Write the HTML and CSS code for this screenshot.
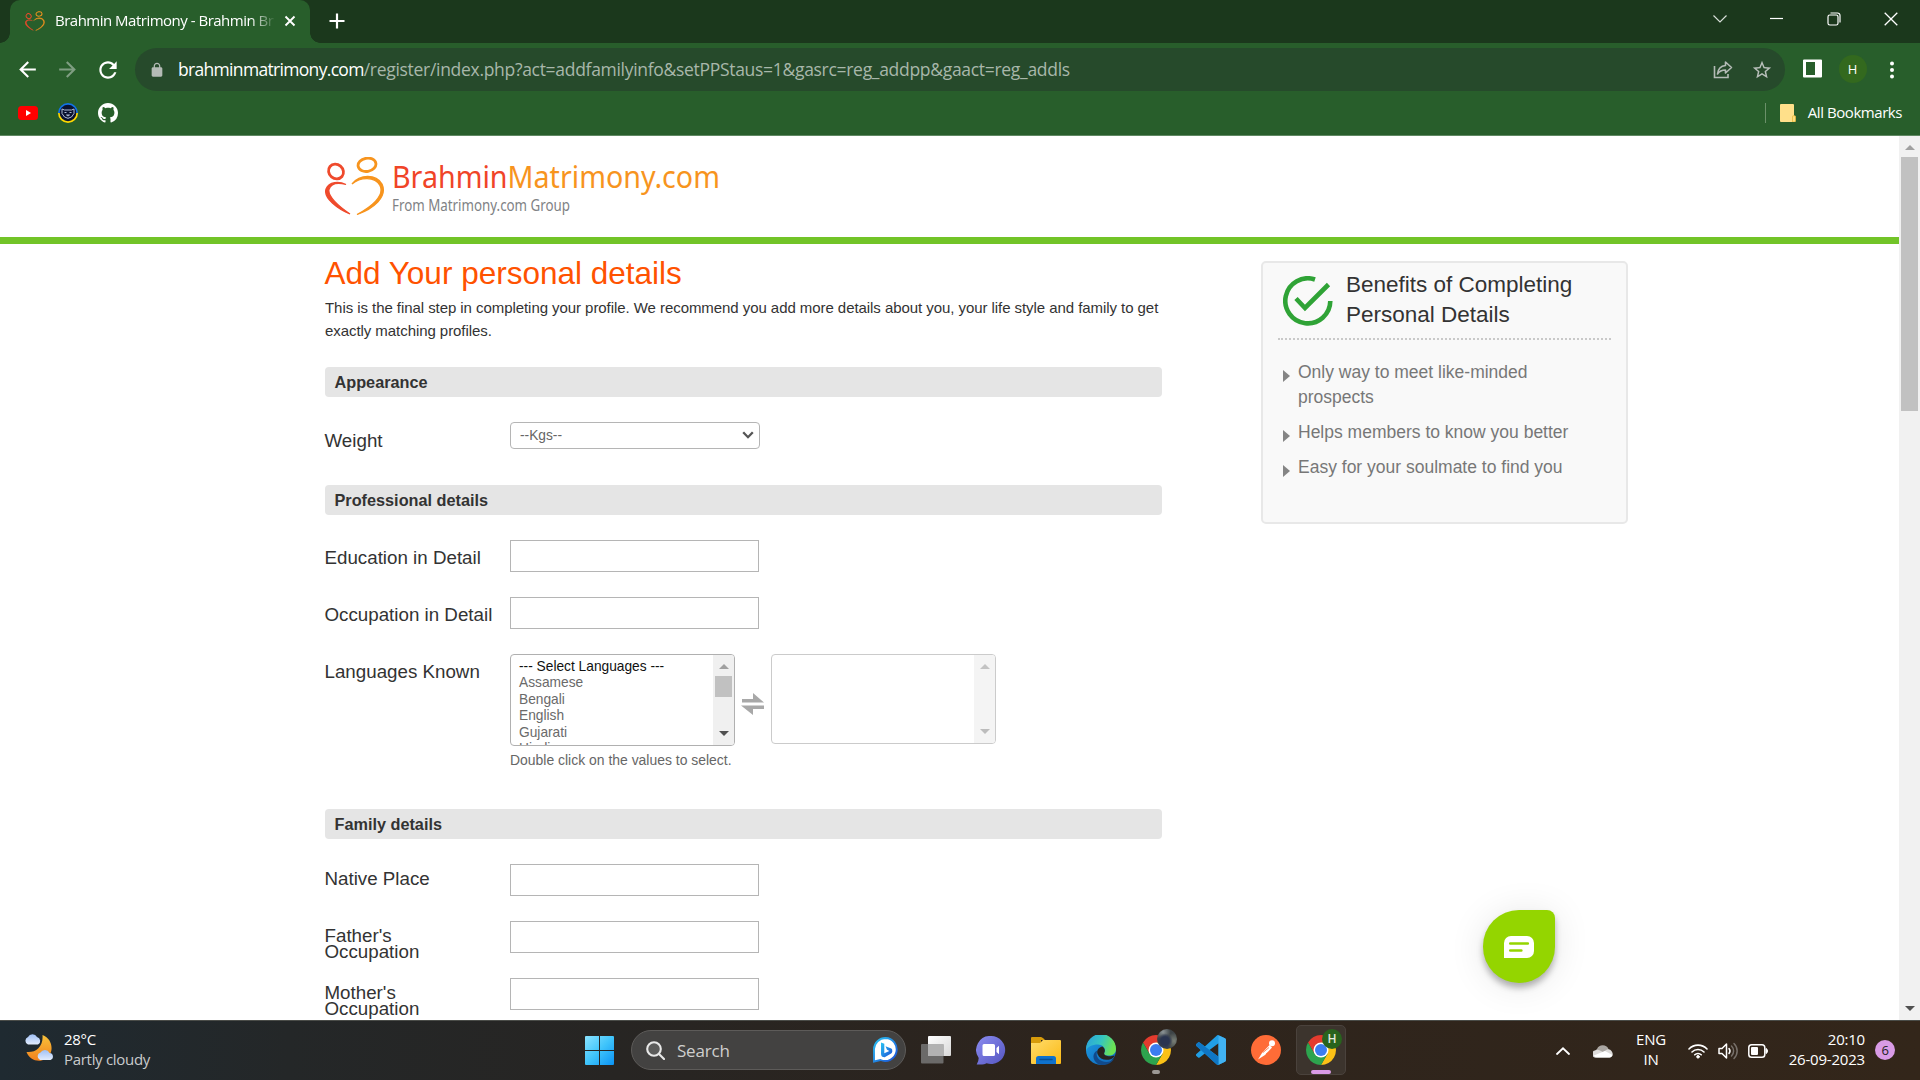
FILE: index.html
```html
<!DOCTYPE html>
<html lang="en">
<head>
<meta charset="utf-8">
<title>Brahmin Matrimony - Brahmin Brides</title>
<link rel="stylesheet" href="styles.css">
</head>
<body>
<svg class="defs" width="0" height="0">
  <defs>
    <symbol id="couple" viewBox="0 0 60 58">
      <g fill="none" stroke-linecap="round">
        <g stroke="#ef4a2c">
          <ellipse cx="11" cy="14.500" rx="7.800" ry="7" stroke-width="2.800" transform="rotate(40 11 14.500)"/>
          <path d="M21 27.500C14 24 4 24.500 1 32c-3 9 12 20 24 25C13 49 2.500 39 4 32.500 6 26 13 25.500 21 27.500z" stroke-width="1.200" fill="#ef4a2c"/>
        </g>
        <g stroke="#f7941e">
          <ellipse cx="42" cy="7.800" rx="9" ry="6.600" stroke-width="2.800" transform="rotate(-10 42 7.800)"/>
          <path d="M27 27C35 17 51 17 57 27c6 13-9 25-25 30.500C46 50 60 39 55 28.500 50 19 35 20 27 27z" stroke-width="1.300" fill="#f7941e"/>
        </g>
      </g>
    </symbol>
    <symbol id="chrome" viewBox="-12 -12 24 24">
      <path fill="#e33b2e" d="M-10.390-6A12 12 0 0 1 10.390-6H0L-5.200 3z"/>
      <path fill="#fbc116" d="M10.390-6A12 12 0 0 1 0 12L5.200 3 0-6z"/>
      <path fill="#2da44e" d="M0 12A12 12 0 0 1-10.390-6L-5.200 3H5.200z"/>
      <circle r="6" fill="#fff"/><circle r="4.800" fill="#3b7df0"/>
    </symbol>
    <linearGradient id="win" x1="0" y1="0" x2="1" y2="1"><stop offset="0" stop-color="#8be3ff"/><stop offset=".5" stop-color="#3fc4fb"/><stop offset="1" stop-color="#0b93f5"/></linearGradient>
    <linearGradient id="moon" x1="0" y1="0" x2="0" y2="1"><stop offset="0" stop-color="#f8c23a"/><stop offset="1" stop-color="#f2811d"/></linearGradient>
    <linearGradient id="cloud" x1="0" y1="0" x2="0" y2="1"><stop offset="0" stop-color="#9fc0f6"/><stop offset="1" stop-color="#e3ecfd"/></linearGradient>
    <linearGradient id="bing" x1="0" y1="0" x2="1" y2="1"><stop offset="0" stop-color="#29c3f2"/><stop offset="1" stop-color="#1b4fd6"/></linearGradient>
    <linearGradient id="meet" x1="0" y1="0" x2="1" y2="1"><stop offset="0" stop-color="#8b8cf0"/><stop offset="1" stop-color="#5455c0"/></linearGradient>
    <linearGradient id="folder" x1="0" y1="0" x2="1" y2="1"><stop offset="0" stop-color="#ffdc6b"/><stop offset="1" stop-color="#fbb914"/></linearGradient>
    <linearGradient id="edgeTop" x1="0" y1="0" x2="1" y2=".3"><stop offset="0" stop-color="#2a9fe0"/><stop offset=".55" stop-color="#35c5c0"/><stop offset="1" stop-color="#6be254"/></linearGradient>
    <linearGradient id="edgeBody" x1="0" y1="0" x2="1" y2="1"><stop offset="0" stop-color="#1f9fe4"/><stop offset="1" stop-color="#0c62b8"/></linearGradient>
    <linearGradient id="view" x1="0" y1="0" x2="1" y2="1"><stop offset="0" stop-color="#fff"/><stop offset="1" stop-color="#d8d8d8"/></linearGradient>
  </defs>
</svg>

<div class="browser">
  <div class="tabstrip">
    <div class="tab">
      <svg class="favicon" width="20" height="20"><use href="#couple"/></svg>
      <span class="tab-title">Brahmin Matrimony - Brahmin Br</span>
      <svg width="12" height="12" viewBox="0 0 12 12"><path d="M1.500 1.500l9 9m0-9l-9 9" stroke="#fff" stroke-width="1.900"/></svg>
    </div>
    <svg class="new-tab" width="16" height="16" viewBox="0 0 16 16"><path d="M8 .5v15M.5 8h15" stroke="#fff" stroke-width="2.200"/></svg>
    <div class="window-controls">
      <span><svg width="14" height="8" viewBox="0 0 14 8"><path d="M.5.500L7 7l6.500-6.500" fill="none" stroke="#d7dfd8" stroke-width="1.200"/></svg></span>
      <span><svg width="13" height="13" viewBox="0 0 13 13"><path d="M0 6.500h13" stroke="#fff" stroke-width="1.200"/></svg></span>
      <span><svg width="14" height="14" viewBox="0 0 14 14" fill="none" stroke="#fff" stroke-width="1.200"><rect x="1" y="3" width="10" height="10" rx="1.800"/><path d="M3.500 1h7A2.500 2.500 0 0 1 13 3.500v7"/></svg></span>
      <span><svg width="14" height="14" viewBox="0 0 14 14"><path d="M.7.700l12.600 12.600m0-12.600L.7 13.300" stroke="#fff" stroke-width="1.300"/></svg></span>
    </div>
  </div>

  <div class="toolbar">
    <span class="tool"><svg width="25" height="25" viewBox="0 0 24 24" fill="#fff"><path d="M20 11H7.830l5.590-5.590L12 4l-8 8 8 8 1.410-1.410L7.830 13H20v-2z"/></svg></span>
    <span class="tool"><svg width="25" height="25" viewBox="0 0 24 24" fill="#7f9e82"><path d="M4 11h12.170l-5.590-5.590L12 4l8 8-8 8-1.410-1.410L16.170 13H4v-2z"/></svg></span>
    <span class="tool reload"><svg width="26" height="26" viewBox="0 0 24 24" fill="#fff"><path d="M17.650 6.350C16.200 4.900 14.210 4 12 4c-4.420 0-7.990 3.580-7.990 8s3.570 8 7.990 8c3.730 0 6.840-2.550 7.730-6h-2.080c-.82 2.330-3.040 4-5.650 4-3.310 0-6-2.690-6-6s2.690-6 6-6c1.660 0 3.140.69 4.220 1.780L13 11h7V4l-2.350 2.350z"/></svg></span>
    <div class="omnibox">
      <svg width="16" height="16" viewBox="0 0 24 24" fill="#b4bbb6"><path d="M18 8h-1V6c0-2.760-2.240-5-5-5S7 3.240 7 6v2H6c-1.100 0-2 .9-2 2v10c0 1.100.9 2 2 2h12c1.100 0 2-.9 2-2V10c0-1.100-.9-2-2-2zM8.900 6c0-1.710 1.390-3.100 3.100-3.100s3.100 1.390 3.100 3.100v2H8.900V6z"/></svg>
      <span class="url"><span class="host">brahminmatrimony.com</span><span class="path">/register/index.php?act=addfamilyinfo&amp;setPPStaus=1&amp;gasrc=reg_addpp&amp;gaact=reg_addls</span></span>
      <span class="omni-action"><svg width="20" height="19" viewBox="0 0 20 19" fill="none" stroke="#b4bbb6" stroke-width="1.600"><path d="M1.500 6v11.500H15v-3.500"/><path d="M12.500 2l6 5.500-6 5.500V10c-4 0-6 1-8 4 .5-5 3-8 8-8.500z" stroke-linejoin="round"/></svg></span>
      <span class="omni-action"><svg width="22" height="22" viewBox="0 0 24 24" fill="#b9c0bb"><path d="M22 9.240l-7.190-.62L12 2 9.190 8.630 2 9.240l5.460 4.730L5.820 21 12 17.270 18.180 21l-1.630-7.030L22 9.240zM12 15.400l-3.760 2.270 1-4.280-3.320-2.880 4.380-.38L12 6.100l1.710 4.040 4.380.38-3.320 2.880 1 4.280L12 15.400z"/></svg></span>
    </div>
    <span class="tool side"><svg width="19" height="19" viewBox="0 0 19 19"><path fill="#fff" fill-rule="evenodd" d="M1 .5h17q1 0 1 1v16q0 1-1 1H1q-1 0-1-1v-16q0-1 1-1zM3 3v13h9V3z"/></svg></span>
    <span class="tool avatar"><span class="profile">H</span></span>
    <span class="tool"><svg width="6" height="18" viewBox="0 0 6 18" fill="#fff"><circle cx="3" cy="2.500" r="2"/><circle cx="3" cy="9" r="2"/><circle cx="3" cy="15.500" r="2"/></svg></span>
  </div>

  <div class="bookmarks">
    <span class="tool"><svg width="20" height="14" viewBox="0 0 20 14"><rect width="20" height="14" rx="3.500" fill="#f00"/><path d="M8 4l5 3-5 3z" fill="#fff"/></svg></span>
    <span class="tool"><svg width="20" height="20" viewBox="0 0 20 20"><path d="M0 10a10 10 0 0 1 20 0z" fill="#1272e8"/><path d="M0 10a10 10 0 0 0 20 0z" fill="#ffd900"/><circle cx="10" cy="10" r="8.300" fill="#0b1230"/><path d="M4 6l2.500 1h7L16 6v4.500L13.500 14 10 15.300 6.500 14 4 10.500zM6.500 9.500h2m3 0h2M8.500 12h3l-1.500 1z" fill="none" stroke="#aebbd6" stroke-width="1"/></svg></span>
    <span class="tool"><svg width="20" height="20" viewBox="0 0 16 16" fill="#fff"><path d="M8 0C3.580 0 0 3.580 0 8c0 3.540 2.290 6.530 5.470 7.590.4.070.55-.17.55-.38 0-.19-.01-.82-.01-1.490-2.010.37-2.530-.49-2.690-.94-.09-.23-.48-.94-.82-1.130-.28-.15-.68-.52-.01-.53.63-.01 1.080.58 1.230.82.720 1.210 1.870.87 2.330.66.070-.52.280-.87.510-1.070-1.780-.2-3.640-.89-3.640-3.950 0-.87.310-1.590.820-2.150-.08-.2-.36-1.020.08-2.120 0 0 .67-.21 2.200.82.640-.18 1.320-.27 2-.27s1.360.09 2 .27c1.530-1.040 2.200-.82 2.200-.82.440 1.100.160 1.920.080 2.120.510.560.820 1.270.820 2.150 0 3.070-1.870 3.750-3.650 3.950.290.250.540.730.540 1.480 0 1.070-.01 1.930-.01 2.200 0 .21.150.460.550.380A8.010 8.010 0 0 0 16 8c0-4.420-3.580-8-8-8z"/></svg></span>
    <div class="all-bookmarks">
      <svg width="16" height="18" viewBox="0 0 16 18"><path d="M1 0h12q1 0 1 1v16q0 1-1 1H1q-1 0-1-1V1q0-1 1-1z" fill="#ffe08a"/><path d="M12.500 18v-5.500q0-.7.700-.7h1.600q.7 0 .7.700V17q0 1-1 1z" fill="#ffdf80" stroke="#e8b93c" stroke-width=".8"/></svg>
      <span>All Bookmarks</span>
    </div>
  </div>
</div>

<div class="viewport">
  <div class="page">
    <header class="site-header">
      <svg width="60" height="58"><use href="#couple"/></svg>
      <svg class="wordmark" width="330" height="62" viewBox="0 0 330 62">
        <text y="31" font-size="31.500" textLength="328" lengthAdjust="spacingAndGlyphs"><tspan fill="#f04427">Brahmin</tspan><tspan fill="#f7941e">Matrimony.com</tspan></text>
        <text y="54" font-size="15.500" fill="#808285" textLength="178" lengthAdjust="spacingAndGlyphs">From Matrimony.com Group</text>
      </svg>
    </header>
    <div class="columns">
      <main class="form">
        <h1>Add Your personal details</h1>
        <p class="intro">This is the final step in completing your profile. We recommend you add more details about you, your life style and family to get<br>exactly matching profiles.</p>

        <h2>Appearance</h2>
        <div class="row row-weight">
          <label>Weight</label>
          <div class="select"><span>--Kgs--</span><svg width="12" height="8" viewBox="0 0 12 8"><path d="M1.200 1.200L6 6.200l4.800-5" fill="none" stroke="#555" stroke-width="2.300"/></svg></div>
        </div>

        <h2>Professional details</h2>
        <div class="row"><label>Education in Detail</label><input type="text"></div>
        <div class="row"><label>Occupation in Detail</label><input type="text"></div>
        <div class="row row-languages">
          <label>Languages Known</label>
          <div>
            <div class="pickers">
              <div class="listbox">
                <div class="options"><span class="first">--- Select Languages ---</span><span>Assamese</span><span>Bengali</span><span>English</span><span>Gujarati</span><span>Hindi</span></div>
                <div class="bar"><i class="up"></i><b></b><i class="down dark"></i></div>
              </div>
              <svg class="swap" width="24" height="22" viewBox="0 0 24 22" fill="#a8a8a8"><path d="M1 6h11V0l11 9.500H1zM23 16H12v6L0 12.500h23z"/></svg>
              <div class="listbox disabled"><div class="options"></div><div class="bar"><i class="up"></i><i class="down"></i></div></div>
            </div>
            <div class="hint">Double click on the values to select.</div>
          </div>
        </div>

        <h2>Family details</h2>
        <div class="row row-family"><label>Native Place</label><input type="text"></div>
        <div class="row row-family"><label>Father's<br>Occupation</label><input type="text"></div>
        <div class="row row-family"><label>Mother's<br>Occupation</label><input type="text"></div>
      </main>

      <aside class="benefits">
        <div class="benefits-head">
          <svg width="50" height="50" viewBox="0 0 50 50" fill="none" stroke="#2fa336" stroke-width="4.600"><path d="M32 3.500A22.500 22.500 0 1 0 47.300 25"/><path d="M13 22.500l9 9.500L45.500 8.500"/></svg>
          <h3>Benefits of Completing<br>Personal Details</h3>
        </div>
        <ul>
          <li>Only way to meet like-minded<br>prospects</li>
          <li>Helps members to know you better</li>
          <li>Easy for your soulmate to find you</li>
        </ul>
      </aside>
    </div>
  </div>
  <div class="page-scroll"><i class="up"></i><b></b><i class="down dark"></i></div>
  <div class="chat">
    <svg width="30" height="22" viewBox="0 0 30 22"><path d="M7 0h16a7 7 0 0 1 7 7v8a7 7 0 0 1-7 7H0V7a7 7 0 0 1 7-7z" fill="#fff"/><path d="M6.300 7.500h17.500M6.300 14.500h11" stroke="#94d500" stroke-width="2.700" stroke-linecap="round"/></svg>
  </div>
</div>

<div class="taskbar">
  <div class="weather">
    <svg width="30" height="30" viewBox="0 0 30 30"><path d="M18.500 2c11 4 12 19 3 24-7 4-16 1-19-7 9 1 17-5 16-17z" fill="url(#moon)"/><path d="M4 11.500a4 4 0 0 1 0-7.500 5 5 0 0 1 9 0 4 4 0 0 1 1 7.500z" fill="url(#cloud)"/><path d="M16 27a4 4 0 0 1 .5-7.500 5 5 0 0 1 9 .5 3.600 3.600 0 0 1 1 7z" fill="url(#cloud)"/></svg>
    <div class="forecast"><span class="temp">28°C</span><span class="sky">Partly cloudy</span></div>
  </div>
  <div class="apps">
    <span class="app"><svg width="29" height="29" viewBox="0 0 29 29" fill="url(#win)"><path d="M1 0h13v14H0V1q0-1 1-1zM15 0h13q1 0 1 1v13H15zM0 15h14v14H1q-1 0-1-1zM15 15h14v13q0 1-1 1H15z"/></svg></span>
    <div class="search">
      <svg width="19" height="19" viewBox="0 0 19 19" fill="none" stroke="#e8e8e8" stroke-width="2.100"><circle cx="8" cy="8" r="6.800" fill="#5c5c5b"/><path d="M13 13l5 5" stroke-linecap="round"/></svg>
      <span>Search</span>
      <svg class="bing" width="25" height="26" viewBox="0 0 25 26"><path d="M12.500 1a11.500 11.500 0 1 1-5 22L1 24.500V12A11.500 11.500 0 0 1 12.500 1z" fill="#fff" stroke="url(#bing)" stroke-width="1.900"/><path d="M8 5.500l3.300 1.300v9.500l5-2.300-2.300-1.200-1.500-3.500 5.800 2.300q1.200.7 1 2.800-.3 1.700-1.600 2.400l-6 3.500q-3.700 0-3.700-3.500z" fill="url(#bing)"/></svg>
    </div>
    <span class="app"><svg width="30" height="28" viewBox="0 0 30 28"><path d="M8 0h21q1 0 1 1v18q0 1-1 1H8q-1 0-1-1V1q0-1 1-1z" fill="url(#view)"/><rect y="8" width="22.500" height="19.500" rx="1" fill="#777" fill-opacity=".85"/><path d="M7 8h15.500v12H7z" fill="#b2b2b2"/></svg></span>
    <span class="app"><svg width="30" height="29" viewBox="0 0 30 29"><path d="M15 0a14 14 0 1 1-4.500 27.200q-2 1.800-9.800 1.300 2-3.500 2-6.500A14 14 0 0 1 15 0z" fill="url(#meet)"/><path d="M8 8h9.500q1.500 0 1.500 1.500v9q0 1.500-1.500 1.500H8q-1.500 0-1.500-1.500v-9Q6.500 8 8 8zM20.500 12l2.500-2.300V18.300L20.500 16z" fill="#fff"/></svg></span>
    <span class="app"><svg width="30" height="27" viewBox="0 0 30 27"><path d="M1 0h9q1 0 2.500 1.500L14 3H0V1q0-1 1-1z" fill="#d79b0b"/><path d="M0 2h10v7H0z" fill="#d79b0b"/><path d="M0 6h9l3-3h17q1 0 1 1v22q0 1-1 1H1q-1 0-1-1z" fill="url(#folder)"/><path d="M7.500 19h15q2.500 0 2.500 2.500V27H5v-5.500Q5 19 7.500 19z" fill="#0f72cd"/><path d="M9 22.500h12" stroke="#0a4f94" stroke-width="1.500" stroke-linecap="round"/></svg></span>
    <span class="app"><svg width="30" height="30" viewBox="0 0 30 30"><circle cx="15" cy="15" r="15" fill="url(#edgeBody)"/><path d="M0 14A15 15 0 0 1 30 14c0 5-4 7-8.500 6.500-3 0-4.300-1.300-3.300-2.600C20.500 14 17 9.500 12 9.500 6 9.500 1 12 0 16z" fill="url(#edgeTop)"/><path d="M11.500 15.500c-3 6 2 11.500 9 11.500 3 0 5.500-1 8-3.500-4 6.500-12 8-16.500 5.500-6-4-6-11-.5-13.500z" fill="#114a8b"/><path d="M18.200 18c1.500-2.500.5-5-2-6.500-4 1-6 4.500-4.500 8 2 5 8 6.500 13.500 4.500 2.500-1 3.800-3 3-3.500-2.500 1-10.500 1.500-10-2.500z" fill="#28231f"/></svg></span>
    <span class="app"><svg width="30" height="30"><use href="#chrome"/></svg><span class="badge photo"></span><i class="running"></i></span>
    <span class="app"><svg width="30" height="30" viewBox="0 0 24 24"><path fill="#219fe6" d="M23.150 2.587L18.210.210a1.494 1.494 0 0 0-1.705.290l-9.460 8.630-4.120-3.128a.999.999 0 0 0-1.276.057L.327 7.261A1 1 0 0 0 .326 8.740L3.899 12 .326 15.260a1 1 0 0 0 .001 1.479L1.650 17.940a.999.999 0 0 0 1.276.057l4.120-3.128 9.460 8.630a1.492 1.492 0 0 0 1.704.290l4.942-2.377A1.500 1.500 0 0 0 24 20.060V3.939a1.500 1.500 0 0 0-.85-1.352zm-5.146 14.861L10.826 12l7.178-5.448v10.896z"/><path d="M18 .3l5.150 2.287a1.500 1.500 0 0 1 .850 1.352V20.060a1.500 1.500 0 0 1-.85 1.352L18 23.700z" fill="#41b2f2"/><path d="M.326 8.740a1 1 0 0 1 0-1.480L1.650 6.060a1 1 0 0 1 1.276-.057L18 17.448V23.700a1.490 1.490 0 0 1-1.500-.2z" fill="#0f76c4"/></svg></span>
    <span class="app"><svg width="30" height="30" viewBox="0 0 30 30"><circle cx="15" cy="15" r="15" fill="#ff6c37"/><circle cx="21" cy="8.300" r="3" fill="#fff"/><path d="M18.500 10l2.500 2.500-7 7.500-7 4.500 4-6.500z" fill="#fff"/><path d="M12 17.500l6-5M15 19l5-3" stroke="#ff6c37" stroke-width=".8"/></svg></span>
    <span class="app active"><svg width="30" height="30"><use href="#chrome"/></svg><span class="badge">H</span><i class="running"></i></span>
  </div>
  <div class="tray">
    <span class="slot"><svg width="14" height="8" viewBox="0 0 14 8"><path d="M1 7l6-5.700L13 7" fill="none" stroke="#fff" stroke-width="1.800" stroke-linecap="round"/></svg></span>
    <span class="slot"><svg width="20" height="14" viewBox="0 0 20 14"><path d="M4 12a4 4 0 0 1 0-7 6.300 6.300 0 0 1 11.500 0L17 12z" fill="#aaa6a2"/><path d="M3.500 13.500A3.500 3.500 0 0 1 2 6.500q2-1.500 4.500-.3L10 8l4-2.500q3-1 4.500 1.500 3 4-1 6.500z" fill="#dedcda"/><path d="M3.500 13.500a3.500 3.500 0 0 1-2.700-2L12 7l7.500 4a3.500 3.500 0 0 1-3 2.500z" fill="#fff"/></svg></span>
    <span class="lang">ENG<br>IN</span>
    <span class="slot net"><svg width="20" height="16" viewBox="0 0 20 16" fill="none" stroke="#fff" stroke-width="1.600" stroke-linecap="round"><path d="M1 6a12.500 12.500 0 0 1 18 0M4 9a8.400 8.400 0 0 1 12 0M6.800 11.800a4.500 4.500 0 0 1 6.400 0"/><circle cx="10" cy="13.800" r="1.300" fill="#fff" stroke-width="1"/></svg></span>
    <span class="slot net"><svg width="20" height="18" viewBox="0 0 20 18" fill="none" stroke="#fff" stroke-width="1.500" stroke-linecap="round"><path d="M1 6.500h3L8.500 2v14L4 11.500H1z" stroke-linejoin="round"/><path d="M11 6.500a4 4 0 0 1 0 5"/><path d="M13.500 4a7 7 0 0 1 0 10M16 1.500a10.500 10.500 0 0 1 0 15" stroke="#77706a"/></svg></span>
    <span class="slot net"><svg width="20" height="14" viewBox="0 0 20 14"><rect x=".8" y=".8" width="16" height="12.400" rx="2.800" fill="none" stroke="#fff" stroke-width="1.500"/><rect x="3" y="3" width="7" height="8" rx="1" fill="#fff"/><path d="M18 4.500q1.500.5 1.500 2.500T18 9.500z" fill="#fff" stroke="#fff"/></svg></span>
    <span class="clock">20:10<br>26-09-2023</span>
    <span class="count">6</span>
  </div>
</div>
</body>
</html>
```
FILE: styles.css
```css
* { box-sizing: border-box; }
body { margin: 0; width: 1920px; height: 1080px; overflow: hidden; display: flex; flex-direction: column; background: #fff; font-family: "Liberation Sans", Arial, sans-serif; color: #333; }
svg { display: block; flex: none; }
.defs { position: absolute; }

/* Browser chrome */
.browser { height: 136px; flex: none; background: #285e2b; border-bottom: 1px solid #5f8862; font-family: "Open Sans", "Noto Sans", sans-serif; color: #fff; }
.tabstrip { height: 43px; display: flex; align-items: center; background: #1b381c; padding-left: 10px; }
.tab { position: relative; width: 300px; height: 43px; padding: 0 14px 2px 15px; display: flex; align-items: center; background: #285e2b; border-radius: 10px 10px 0 0; }
.tab::before, .tab::after { content: ""; position: absolute; bottom: 0; width: 10px; height: 10px; }
.tab::before { left: -10px; background: radial-gradient(circle at 0 0, transparent 9.5px, #285e2b 10px); }
.tab::after { right: -10px; background: radial-gradient(circle at 100% 0, transparent 9.5px, #285e2b 10px); }
.tab-title { width: 219px; margin: 0 10px; padding-bottom: 1px; white-space: nowrap; font-size: 15px; letter-spacing: -0.5px; -webkit-mask-image: linear-gradient(90deg, #000 195px, transparent 221px); mask-image: linear-gradient(90deg, #000 195px, transparent 221px); }
.new-tab { margin: 0 0 1px 19px; }
.window-controls { margin-left: auto; padding-right: 1px; display: flex; height: 37px; align-self: flex-start; }
.window-controls span { width: 57px; display: flex; align-items: center; justify-content: center; }
.toolbar { height: 53px; padding-left: 7px; display: flex; align-items: center; }
.tool { width: 40px; flex: none; display: flex; align-items: center; justify-content: center; }
.reload { padding-left: 2px; }
.omnibox { width: 1650px; height: 43px; margin: 0 7px 0 8px; padding: 0 4px 0 14px; border-radius: 22px; background: #264a2b; display: flex; align-items: center; }
.url { margin-left: 13px; margin-right: auto; padding-bottom: 1px; font-size: 17.5px; white-space: nowrap; }
.host { letter-spacing: -0.68px; }
.path { color: #a8b7aa; letter-spacing: -0.3px; }
.omni-action { width: 39px; display: flex; justify-content: center; }
.side { padding-bottom: 2px; }
.avatar { padding: 0 0 1px 1px; }
.profile { width: 28px; height: 28px; border-radius: 50%; background: #33691e; text-align: center; font-size: 13px; line-height: 28px; }
.bookmarks { height: 39px; padding: 0 18px 5px 8px; display: flex; align-items: center; }
.all-bookmarks { height: 20px; margin-left: auto; padding-left: 14px; border-left: 1px solid #6b9069; display: flex; align-items: center; gap: 12px; font-size: 15px; letter-spacing: -0.44px; }
.all-bookmarks span { padding-bottom: 2px; }

/* Page */
.viewport { height: 884px; display: flex; overflow: hidden; }
.page { width: 1899px; height: 884px; overflow: hidden; }
.site-header { height: 108px; padding: 21px 0 0 324.5px; display: flex; gap: 7px; border-bottom: 7px solid #72c428; }
.wordmark { overflow: visible; font-family: "Noto Sans", sans-serif; }
.columns { display: flex; align-items: flex-start; padding-left: 325px; }
.form { width: 837px; padding-top: 9px; }
h1, h2, h3, p, ul { margin: 0; font-weight: normal; }
h1 { margin-left: -0.5px; font-size: 31.5px; line-height: 40px; color: #ff5200; }
.intro { margin: 3px 0 25px; font-size: 15px; line-height: 23px; letter-spacing: -0.06px; white-space: nowrap; }
h2 { height: 30px; padding-left: 9.5px; border-radius: 4px; background: #e5e5e5; font-size: 16.25px; font-weight: bold; line-height: 30px; margin-bottom: 25px; }
.row { height: 57px; display: grid; grid-template-columns: 185px 1fr; align-items: start; }
.row label { margin-left: -0.5px; padding-top: 10px; font-size: 18.75px; line-height: 16.25px; }
.row-weight { height: 63px; }
.row-weight label { padding-top: 9px; line-height: 20px; }
.row-languages { height: 155px; }
.row-family label { padding-top: 7px; }
input { width: 249px; height: 32px; margin: 0; border: 1px solid #b5b5b5; background: #fff; }
.select { width: 250px; height: 27px; padding: 0 5px 1px 9px; border: 1px solid #b5b5b5; border-radius: 4px; display: flex; align-items: center; justify-content: space-between; font-size: 13.75px; color: #666; }
.pickers { display: flex; height: 92px; }
.listbox { width: 225px; height: 92px; border: 1px solid #b0b0b0; border-radius: 4px; display: flex; overflow: hidden; }
.options { flex: 1; padding: 4px 0 0 8px; font-size: 13.75px; line-height: 16.4px; color: #6a6a6a; overflow: hidden; }
.options span { display: block; }
.options .first { color: #111; }
.bar { width: 21px; background: #f0f0f0; display: flex; flex-direction: column; align-items: center; padding: 9px 0; }
.bar b { width: 17px; height: 21px; margin-top: 7px; background: #c1c1c1; }
.bar .down { margin-top: auto; }
.up, .down { width: 0; border: 5px solid transparent; border-top: 0; border-bottom: 5px solid #a0a0a0; }
.down { border-bottom: 0; border-top: 5px solid #bcbcbc; }
.down.dark { border-top-color: #505050; }
.disabled { height: 90px; border-color: #cbcbcb; }
.disabled .bar { background: #f4f4f4; }
.disabled .up { border-bottom-color: #c3c3c3; }
.swap { margin: 39px 6px 0; }
.hint { margin-top: 6px; font-size: 13.95px; line-height: 17px; color: #666; white-space: nowrap; }
.benefits { width: 367px; height: 263px; margin: 17px 0 0 99px; padding: 6px 15px; border: 2px solid #e8e8e8; border-radius: 5px; background: #f9f9f9; }
.benefits-head { height: 71px; padding-left: 5px; display: flex; gap: 13px; border-bottom: 2px dotted #c9c9c9; }
.benefits-head svg { margin-top: 7px; }
h3 { margin-top: 1px; font-size: 22.5px; line-height: 30px; white-space: nowrap; color: #333; }
.benefits ul { list-style: none; padding: 20px 0 0 5px; }
.benefits li { position: relative; margin-bottom: 10px; padding-left: 15px; font-size: 17.5px; line-height: 25px; color: #777; white-space: nowrap; }
.benefits li::before { content: ""; position: absolute; left: 0; top: 10px; border: 6px solid transparent; border-left: 7px solid #858585; border-right: 0; }
.page-scroll { width: 21px; height: 884px; background: #f1f1f1; display: flex; flex-direction: column; align-items: center; padding: 9px 0; }
.page-scroll b { width: 17px; height: 254px; margin-top: 7px; background: #c1c1c1; }
.page-scroll .down { margin-top: auto; }
.chat { position: absolute; left: 1483px; top: 910px; width: 72px; height: 73px; border-radius: 36px 8px 36px 36px; background: #94d500; display: flex; align-items: center; justify-content: center; box-shadow: 0 5px 6px rgba(0,0,0,.28), 0 3px 36px rgba(0,0,0,.1); }

/* Taskbar */
.taskbar { height: 60px; flex: none; display: flex; align-items: center; border-top: 1px solid #4a4c48; background: linear-gradient(90deg, #1f2a31 0, #242728 15%, #272523 32%, #2d241d 55%, #33261a 100%); color: #fff; font-family: "Open Sans", "Noto Sans", sans-serif; }
.weather { width: 574px; padding-left: 24px; display: flex; align-items: center; gap: 10px; font-size: 15px; line-height: 20px; letter-spacing: -0.3px; }
.weather span { display: block; }
.weather svg { margin-bottom: 5px; }
.forecast, .clock, .lang { padding-bottom: 4px; }
.sky { color: #c9cbcc; }
.apps { display: flex; align-items: center; gap: 5px; padding-bottom: 1px; }
.app { position: relative; width: 50px; height: 50px; border-radius: 5px; display: flex; align-items: center; justify-content: center; }
.search { width: 275px; height: 40px; margin: 0 0 0 2px; padding: 0 7px 0 14px; border: 1px solid #5d5b59; border-radius: 20px; background: #434241; display: flex; align-items: center; font-size: 17px; letter-spacing: -0.2px; color: #cfcfce; }
.search span { margin-left: 12px; }
.bing { margin-left: auto; }
.active { background: #3c342d; border: 1px solid #4a423c; }
.badge { position: absolute; left: 26px; top: 4px; width: 20px; height: 20px; border-radius: 50%; background: #28631d; color: #e3eadf; font-size: 12px; font-weight: 600; line-height: 20px; text-align: center; }
.active .badge { left: 25px; top: 3px; }
.photo { background: radial-gradient(circle at 40% 60%, #2a3450 0 25%, transparent 45%), radial-gradient(circle at 85% 60%, #7a8077 0, transparent 40%), radial-gradient(circle at 30% 15%, #8b9396 0, transparent 35%), #3d4346; }
.running { position: absolute; bottom: 1px; left: 21px; width: 8px; height: 4px; border-radius: 2px; background: #9d9995; }
.active .running { bottom: 0; left: 14px; width: 20px; background: #d99be6; }
.tray { margin-left: auto; padding-right: 25px; display: flex; align-items: center; font-size: 15px; line-height: 20px; letter-spacing: -0.2px; }
.slot { width: 40px; display: flex; justify-content: center; }
.net { width: 30px; }
.lang { width: 56px; margin-right: 4px; padding-bottom: 3px; text-align: center; }
.clock { width: 93px; margin-right: 9px; padding-right: 1px; text-align: right; white-space: nowrap; }
.count { width: 20px; height: 20px; margin-bottom: 1px; border-radius: 50%; background: #d99be6; color: #222; text-align: center; font-size: 13px; }
```
